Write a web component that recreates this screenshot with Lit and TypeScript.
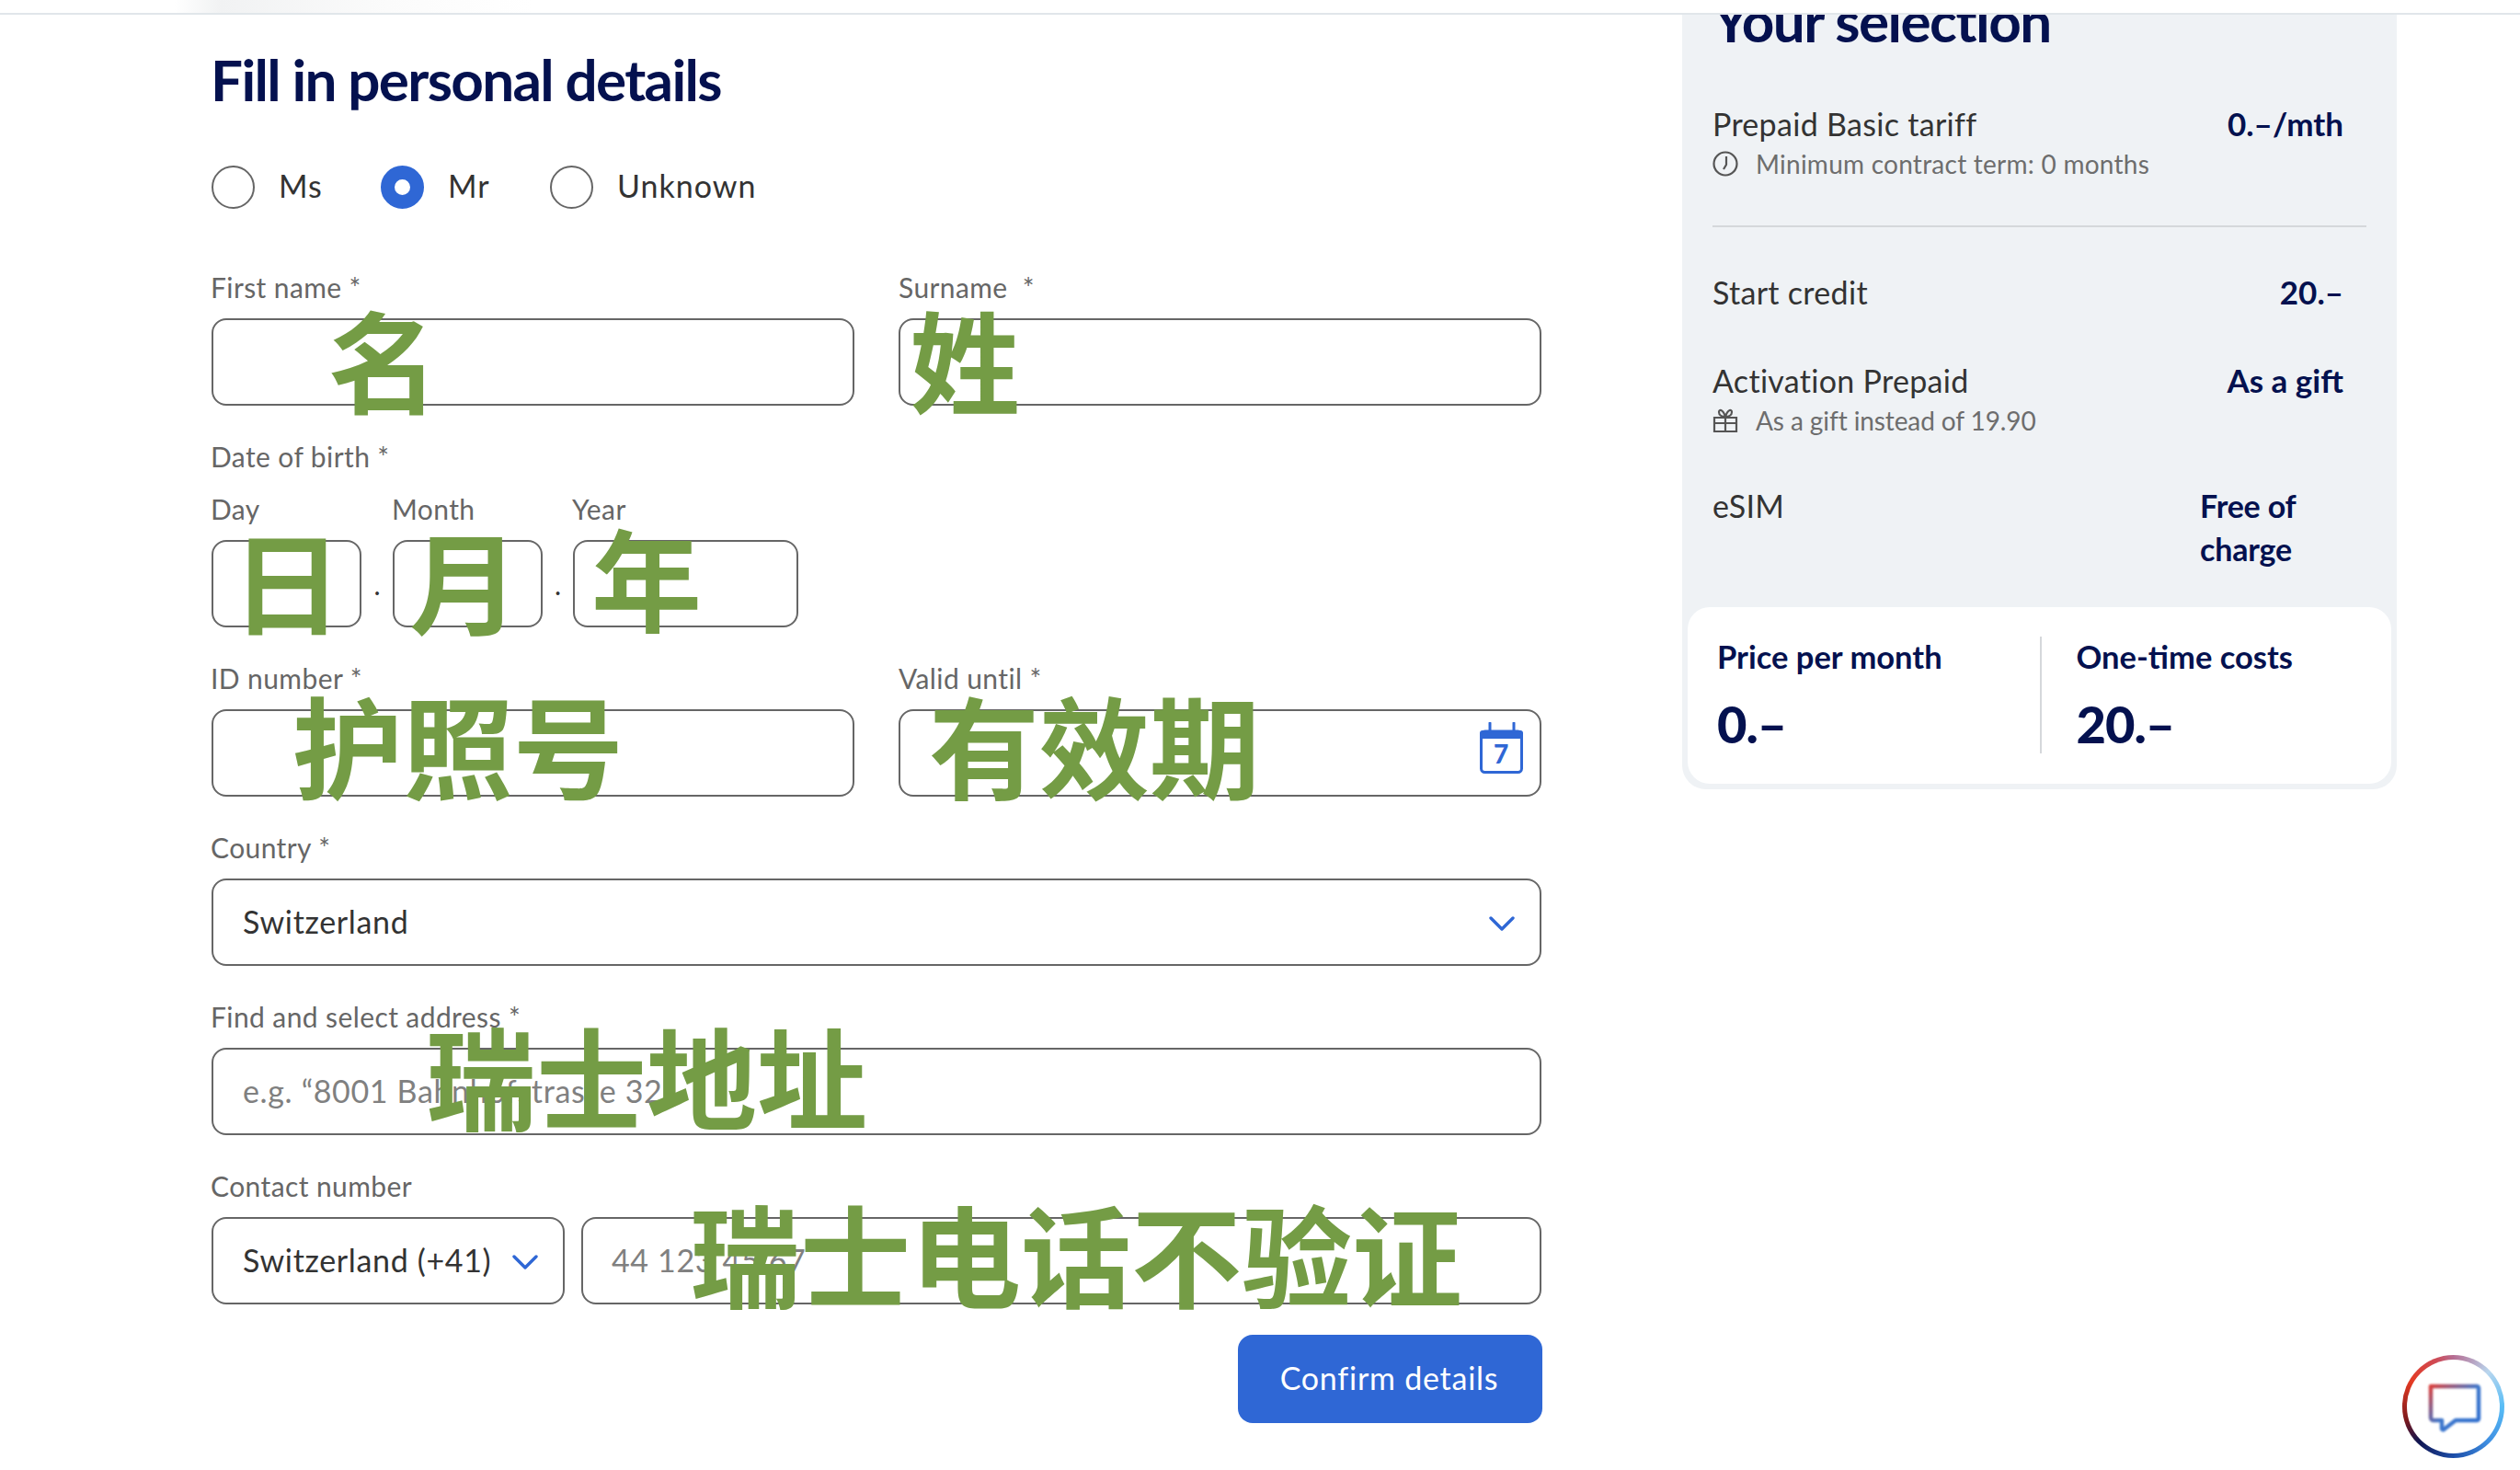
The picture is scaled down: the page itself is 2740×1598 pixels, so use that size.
import { LitElement, html, css, svg } from "lit";
import { customElement } from "lit/decorators.js";

const marks = [
  { t: "名", x: 357, y: 329 },
  { t: "姓", x: 989, y: 329 },
  { t: "日", x: 252, y: 569 },
  { t: "月", x: 445, y: 569 },
  { t: "年", x: 643, y: 566 },
  { t: "护照号", x: 318, y: 748 },
  { t: "有效期", x: 1010, y: 748 },
  { t: "瑞士地址", x: 463, y: 1108 },
  { t: "瑞士电话不验证", x: 750, y: 1301 },
];

const chevron = html`<svg class="chev" viewBox="0 0 28 16" fill="none" stroke="#2f67d5" stroke-width="3.4" stroke-linecap="round" stroke-linejoin="round"><path d="M2 2l12 12L26 2"/></svg>`;

const calendar = html`<svg class="cal" viewBox="0 0 47 56" fill="none">
  <path d="M11 1v9M37 1v9" stroke="#2f67d5" stroke-width="3" stroke-linecap="round"/>
  <path d="M0 12a3 3 0 0 1 3-3h41a3 3 0 0 1 3 3v6H0z" fill="#2f67d5"/>
  <rect x="1.5" y="10" width="44" height="44.5" rx="4" stroke="#2f67d5" stroke-width="3"/>
  <text x="23.5" y="45" text-anchor="middle" class="cal-num">7</text>
</svg>`;

const clock = svg`<circle cx="14" cy="14" r="12.5"/><path d="M15 6v9l-3 5"/>`;
const gift = svg`<path d="M2 11h24v15H2zM14 11v15M2 17h24M14 10c-4 0-7-2-7-5s4-4 7 5c3-9 7-8 7-5s-3 5-7 5z"/>`;

@customElement("app-root")
export class AppRoot extends LitElement {
  static styles = css`
    :host { display: block; position: relative; width: 2740px; height: 1598px; overflow: hidden; background: #fff; font-family: "Lato", "Noto Sans CJK SC", sans-serif; color: #333; }
    * { box-sizing: border-box; }
    .top { position: relative; z-index: 2; height: 16px; background: linear-gradient(90deg, #fff 190px, #f1f2f3 240px, #fbfbfb 420px, #fff 580px); border-bottom: 2px solid #e1e6ea; }
    .main { display: flex; }
    .form { width: 1446px; margin-left: 230px; padding-top: 34px; }
    h1 { margin: 0 0 0 -1px; height: 72px; font-size: 62px; line-height: 72px; font-weight: 700; color: #04114f; letter-spacing: -1.65px; white-space: nowrap; }
    .radios { display: flex; height: 47px; margin: 58px 0 68px; }
    .radio { display: flex; align-items: center; font-size: 34px; letter-spacing: 1px; color: #333; }
    .radio b { font-weight: 400; padding-bottom: 4px; }
    .dot { width: 47px; height: 47px; border-radius: 50%; border: 2px solid #666; margin-right: 26px; }
    .dot.on { border: 15px solid #2f67d5; }
    .r1 { width: 184px; } .r2 { width: 184px; }
    .stack { display: flex; flex-direction: column; gap: 38px; }
    .two { display: grid; grid-template-columns: 699px 699px; column-gap: 48px; }
    label, .lab { display: block; height: 36px; line-height: 35px; margin-bottom: 15px; margin-left: -1px; font-size: 30px; color: #666; letter-spacing: 0.4px; white-space: nowrap; }
    .two > div + div label { margin-left: 0; }
    .dob-head { margin-bottom: 21px; }
    .field { display: flex; align-items: center; justify-content: space-between; height: 95px; border: 2px solid #666; border-radius: 16px; padding: 0 27px 3px 32px; background: #fff; font-size: 34px; letter-spacing: 0.65px; color: #333; white-space: nowrap; }
    .field input { border: 0; outline: 0; padding: 0; width: 100%; background: none; font: inherit; letter-spacing: inherit; color: inherit; }
    .field input::placeholder { color: #808080; opacity: 1; }
    .chev { width: 28px; height: 16px; flex: none; margin-top: 5px; }
    .cal { width: 47px; height: 56px; flex: none; margin: -8px -9px 0 0; }
    .cal-num { font-family: "Lato", sans-serif; font-size: 28px; font-weight: 900; fill: #2f67d5; }
    .dob { display: grid; grid-template-columns: 163px 34px 163px 33px 245px; }
    .dob .sep { display: flex; align-items: center; justify-content: center; font-size: 30px; line-height: 1; padding-top: 52px; color: #333; }
    .phone { display: grid; grid-template-columns: 384px 1fr; column-gap: 18px; }
    .phone .f2 { padding-left: 31px; }
    .actions { display: flex; justify-content: flex-end; margin: 33px -1px 0 0; }
    button { width: 331px; height: 96px; border: 0; border-radius: 16px; background: #2f67d5; color: #fff; font: inherit; font-size: 34px; letter-spacing: 0.75px; padding: 0 2px 3px 0; }
    aside { width: 777px; margin-left: 153px; height: 842px; background: #eff2f5; border-radius: 0 0 26px 26px; overflow: hidden; padding: 0 6px 6px; }
    .body { display: flow-root; padding: 0 52px 0 27px; height: 644px; }
    h2 { margin: -30px 0 53px; height: 72px; font-size: 62px; line-height: 72px; font-weight: 700; color: #04114f; letter-spacing: -1.5px; white-space: nowrap; }
    .row { display: flex; justify-content: space-between; font-size: 34px; line-height: 47px; letter-spacing: 0.3px; color: #333; white-space: nowrap; }
    .val { font-weight: 700; font-size: 35px; color: #04114f; letter-spacing: 0; }
    .wrap { width: 156px; white-space: normal; font-size: 34px; letter-spacing: -0.2px; }
    .sub { display: flex; align-items: center; height: 36px; margin: 2px 0 -2px; font-size: 28px; color: #6d6d6d; letter-spacing: 0.25px; white-space: nowrap; }
    .sub.tight { letter-spacing: -0.1px; }
    .sub svg { width: 28px; height: 28px; margin-right: 19px; fill: none; stroke: #555; stroke-width: 2.2; flex: none; }
    hr { border: 0; height: 2px; background: #d5d8db; margin: 51px -25px 47px 0; }
    .m1 { margin-top: 49px; } .m2 { margin-top: 53px; }
    .card { display: flex; height: 192px; background: #fff; border-radius: 24px; padding: 32px 0 33px; }
    .cell { padding-left: 32px; width: 383px; }
    .cell + .cell { border-left: 2px solid #d5d8db; padding-left: 38px; }
    .cl { font-size: 34.5px; line-height: 44px; font-weight: 700; color: #04114f; white-space: nowrap; }
    .cv { font-size: 56px; line-height: 64px; margin-top: 19px; font-weight: 900; color: #04114f; letter-spacing: -1px; }
    .mark { position: absolute; z-index: 3; font-family: "Noto Sans CJK SC", sans-serif; font-size: 120px; line-height: 1; font-weight: 700; color: #749c45; white-space: nowrap; }
    .chat { position: absolute; z-index: 3; left: 2612px; top: 1473px; width: 111px; height: 112px; border-radius: 50%; background: conic-gradient(#b56c92 0deg, #b9d6ee 45deg, #58bdf6 90deg, #3f8fe2 135deg, #1c4da8 180deg, #10144f 225deg, #7f1a1c 255deg, #e43a22 300deg, #cf4a55 340deg, #b56c92 360deg); padding: 5px; }
    .chat div { width: 100%; height: 100%; border-radius: 50%; background: #fff; display: flex; align-items: center; justify-content: center; }
    .chat svg { width: 60px; height: 56px; margin-top: 5px; filter: blur(0.8px); }
  `;

  render() {
    return html`
      <div class="top"></div>
      <div class="main">
        <section class="form">
          <h1>Fill in personal details</h1>
          <div class="radios">
            <div class="radio r1"><span class="dot"></span><b>Ms</b></div>
            <div class="radio r2"><span class="dot on"></span><b>Mr</b></div>
            <div class="radio"><span class="dot"></span><b>Unknown</b></div>
          </div>
          <div class="stack">
            <div class="two">
              <div><label>First name *</label><div class="field"><input /></div></div>
              <div><label>Surname &nbsp;*</label><div class="field"><input /></div></div>
            </div>
            <div>
              <div class="lab dob-head">Date of birth *</div>
              <div class="dob">
                <div><label>Day</label><div class="field"><input /></div></div>
                <div class="sep">.</div>
                <div><label>Month</label><div class="field"><input /></div></div>
                <div class="sep">.</div>
                <div><label>Year</label><div class="field"><input /></div></div>
              </div>
            </div>
            <div class="two">
              <div><label>ID number *</label><div class="field"><input /></div></div>
              <div><label>Valid until *</label><div class="field"><input />${calendar}</div></div>
            </div>
            <div><label>Country *</label><div class="field"><span>Switzerland</span>${chevron}</div></div>
            <div><label>Find and select address *</label><div class="field"><input placeholder="e.g. “8001 Bahnhofstrasse 32”" /></div></div>
            <div>
              <label>Contact number</label>
              <div class="phone">
                <div class="field f1"><span>Switzerland (+41)</span>${chevron}</div>
                <div class="field f2"><input placeholder="44 123 45 67" /></div>
              </div>
            </div>
          </div>
          <div class="actions"><button>Confirm details</button></div>
        </section>
        <aside>
          <div class="body">
            <h2>Your selection</h2>
            <div class="row"><span>Prepaid Basic tariff</span><span class="val">0.–/mth</span></div>
            <div class="sub"><svg viewBox="0 0 28 28">${clock}</svg>Minimum contract term: 0 months</div>
            <hr />
            <div class="row"><span>Start credit</span><span class="val">20.–</span></div>
            <div class="row m1"><span>Activation Prepaid</span><span class="val">As a gift</span></div>
            <div class="sub tight"><svg viewBox="0 0 28 28">${gift}</svg>As a gift instead of 19.90</div>
            <div class="row m2"><span>eSIM</span><span class="val wrap">Free of charge</span></div>
          </div>
          <div class="card">
            <div class="cell"><div class="cl">Price per month</div><div class="cv">0.–</div></div>
            <div class="cell"><div class="cl">One-time costs</div><div class="cv">20.–</div></div>
          </div>
        </aside>
      </div>
      ${marks.map((m) => html`<div class="mark" style="left:${m.x}px;top:${m.y}px">${m.t}</div>`)}
      <div class="chat"><div>
        <svg viewBox="0 0 60 56" fill="none">
          <defs><linearGradient id="cg" x1="0" y1="0" x2="1" y2="1"><stop offset="0" stop-color="#d8413f"/><stop offset=".5" stop-color="#3f78cc"/><stop offset="1" stop-color="#2f6fd0"/></linearGradient></defs>
          <path d="M5 3h50a2 2 0 0 1 2 2v33a2 2 0 0 1-2 2H32L19 50c-1 .6-2 0-2-1V40H8a3 3 0 0 1-3-3V3z" stroke="url(#cg)" stroke-width="4.5" stroke-linejoin="round"/>
        </svg>
      </div></div>
    `;
  }
}
